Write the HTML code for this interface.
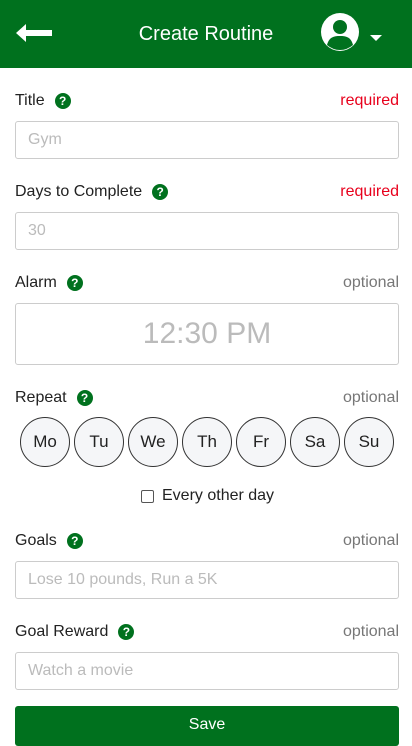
<!DOCTYPE html><html><head><style>
body{margin:0;width:412px;height:734px;overflow:hidden;font-family:"Liberation Sans",sans-serif;background:#fff;position:relative}
.hd{position:absolute;left:0;top:0;width:412px;height:68px;background:#00711e;color:#fff}
.t{position:absolute;left:0;width:412px;top:23px;text-align:center;font-size:20px}
.lab{position:absolute;left:15px;font-size:16px;color:#222;display:flex;align-items:center}
.q{display:inline-block;width:16px;height:16px;border-radius:50%;background:#00711e;color:#fff;font-size:12px;font-weight:bold;text-align:center;line-height:16px;margin-left:10px}
.st{position:absolute;right:13px;font-size:16px}
.req{color:#e8001c}.opt{color:#777}
.in{position:absolute;left:15px;width:384px;height:36px;border:1px solid #ccc;border-radius:3px;color:#bbb;font-size:16px;box-sizing:border-box;padding-left:12px;line-height:34px}
.c{position:absolute;top:417px;width:48px;height:48px;border:1px solid #333;border-radius:50%;background:#f5f6f8;text-align:center;line-height:48px;font-size:17px;color:#222}
</style></head><body>
<div class="hd">
<svg style="position:absolute;left:16px;top:24px" width="36" height="18" viewBox="0 0 36 18"><path d="M0 9L10 0V6H36V12H10V18Z" fill="#fff"/></svg>
<div class="t">Create Routine</div>
<svg style="position:absolute;left:320px;top:12px" width="40" height="40" viewBox="0 0 40 40"><circle cx="20" cy="20" r="19" fill="#fff"/><circle cx="20" cy="15" r="7" fill="#00711e"/><path d="M7 33C9 25 14 24 20 24S31 25 33 33Q27 38 20 38T7 33Z" fill="#00711e"/></svg>
<svg style="position:absolute;left:370px;top:35px" width="12" height="7"><path d="M0 0H12L6 6Z" fill="#fff"/></svg>
</div>
<div class="lab" style="top:92px">Title<span class="q">?</span></div><div class="st req" style="top:92px">required</div>
<div class="in" style="top:121px;height:38px;line-height:36px">Gym</div>
<div class="lab" style="top:183px">Days to Complete<span class="q">?</span></div><div class="st req" style="top:183px">required</div>
<div class="in" style="top:212px;height:38px;line-height:36px">30</div>
<div class="lab" style="top:274px">Alarm<span class="q">?</span></div><div class="st opt" style="top:274px">optional</div>
<div class="in" style="top:303px;height:62px;line-height:60px;text-align:center;padding:0;font-size:30px">12:30 PM</div>
<div class="lab" style="top:389px">Repeat<span class="q">?</span></div><div class="st opt" style="top:389px">optional</div>
<div class="c" style="left:20px">Mo</div><div class="c" style="left:74px">Tu</div><div class="c" style="left:128px">We</div><div class="c" style="left:182px">Th</div><div class="c" style="left:236px">Fr</div><div class="c" style="left:290px">Sa</div><div class="c" style="left:344px">Su</div>
<div style="position:absolute;top:487px;left:141px;font-size:16px;color:#222;display:flex;align-items:center"><span style="width:11px;height:11px;border:1px solid #555;border-radius:2px;margin-right:8px"></span>Every other day</div>
<div class="lab" style="top:532px">Goals<span class="q">?</span></div><div class="st opt" style="top:532px">optional</div>
<div class="in" style="top:561px;height:38px;line-height:36px">Lose 10 pounds, Run a 5K</div>
<div class="lab" style="top:623px">Goal Reward<span class="q">?</span></div><div class="st opt" style="top:623px">optional</div>
<div class="in" style="top:652px;height:38px;line-height:36px">Watch a movie</div>
<div style="position:absolute;left:15px;top:706px;width:384px;height:40px;background:#00711e;border-radius:3px;color:#fff;text-align:center;font-size:16px;line-height:38px">Save</div>
</body></html>
